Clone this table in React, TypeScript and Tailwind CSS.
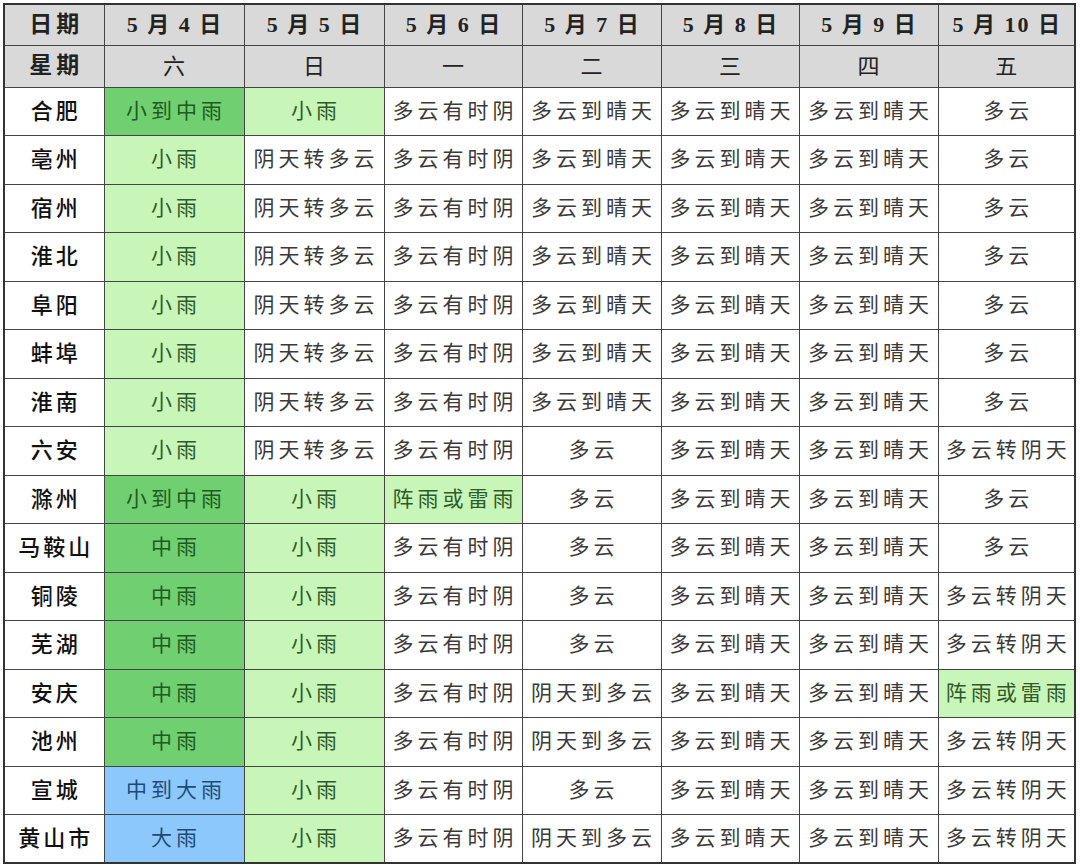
import React from 'react'

type Tone = 'dg' | 'lg' | 'bl' | undefined
type Cell = [string, Tone?]

const dates = ['5 月 4 日', '5 月 5 日', '5 月 6 日', '5 月 7 日', '5 月 8 日', '5 月 9 日', '5 月 10 日']
const weekdays = ['六', '日', '一', '二', '三', '四', '五']
const widths = ['w-[100px]', 'w-[140px]', 'w-[140px]', 'w-[138px]', 'w-[139px]', 'w-[138px]', 'w-[139px]', 'w-[137px]']

const north: Cell[] = [['小雨', 'lg'], ['阴天转多云'], ['多云有时阴'], ['多云到晴天'], ['多云到晴天'], ['多云到晴天'], ['多云']]

const rows: [string, Cell[]][] = [
  ['合肥', [['小到中雨', 'dg'], ['小雨', 'lg'], ['多云有时阴'], ['多云到晴天'], ['多云到晴天'], ['多云到晴天'], ['多云']]],
  ['亳州', north],
  ['宿州', north],
  ['淮北', north],
  ['阜阳', north],
  ['蚌埠', north],
  ['淮南', north],
  ['六安', [['小雨', 'lg'], ['阴天转多云'], ['多云有时阴'], ['多云'], ['多云到晴天'], ['多云到晴天'], ['多云转阴天']]],
  ['滁州', [['小到中雨', 'dg'], ['小雨', 'lg'], ['阵雨或雷雨', 'lg'], ['多云'], ['多云到晴天'], ['多云到晴天'], ['多云']]],
  ['马鞍山', [['中雨', 'dg'], ['小雨', 'lg'], ['多云有时阴'], ['多云'], ['多云到晴天'], ['多云到晴天'], ['多云']]],
  ['铜陵', [['中雨', 'dg'], ['小雨', 'lg'], ['多云有时阴'], ['多云'], ['多云到晴天'], ['多云到晴天'], ['多云转阴天']]],
  ['芜湖', [['中雨', 'dg'], ['小雨', 'lg'], ['多云有时阴'], ['多云'], ['多云到晴天'], ['多云到晴天'], ['多云转阴天']]],
  ['安庆', [['中雨', 'dg'], ['小雨', 'lg'], ['多云有时阴'], ['阴天到多云'], ['多云到晴天'], ['多云到晴天'], ['阵雨或雷雨', 'lg']]],
  ['池州', [['中雨', 'dg'], ['小雨', 'lg'], ['多云有时阴'], ['阴天到多云'], ['多云到晴天'], ['多云到晴天'], ['多云转阴天']]],
  ['宣城', [['中到大雨', 'bl'], ['小雨', 'lg'], ['多云有时阴'], ['多云'], ['多云到晴天'], ['多云到晴天'], ['多云转阴天']]],
  ['黄山市', [['大雨', 'bl'], ['小雨', 'lg'], ['多云有时阴'], ['阴天到多云'], ['多云到晴天'], ['多云到晴天'], ['多云转阴天']]],
]

const toneClass = (t: Tone) => {
  if (t === 'dg') return 'bg-[#70cf70] text-[#1f5a1f]'
  if (t === 'lg') return 'bg-[#c8f5b8] text-[#2f5a2a]'
  if (t === 'bl') return 'bg-[#8dc8fc] text-[#1e4a7a]'
  return 'bg-white text-[#3a3a3a]'
}

export default function App() {
  return (
    <div className="min-h-screen bg-white pt-[3px] pl-[3px]">
      <table
        className="border-collapse border-2 border-[#333] table-fixed"
        style={{ fontFamily: '"Liberation Serif", "Noto Sans CJK SC", serif' }}
      >
        <thead>
          <tr className="h-[41px] bg-[#d9d9d9] text-[#222]">
            <th className={`${widths[0]} border border-[#444] text-[23px] font-semibold tracking-[4px] pl-[4px]`}>日期</th>
            {dates.map((d, i) => (
              <th key={d} className={`${widths[i + 1]} border border-[#444] text-[22px] font-semibold whitespace-pre tracking-[2px] pl-[2px]`}>
                {d}
              </th>
            ))}
          </tr>
          <tr className="h-[42px] bg-[#d9d9d9] text-[#222]">
            <th className="border border-[#444] text-[23px] font-semibold tracking-[4px] pl-[4px]">星期</th>
            {weekdays.map((w) => (
              <th key={w} className="border border-[#444] text-[22px] font-normal">{w}</th>
            ))}
          </tr>
        </thead>
        <tbody>
          {rows.map(([city, cells]) => (
            <tr key={city} className="h-[48.5px]">
              <td className="border border-[#444] bg-white text-center text-[22px] font-medium text-[#111] tracking-[3px] pl-[3px]">
                {city}
              </td>
              {cells.map(([txt, tone], i) => (
                <td
                  key={i}
                  className={`border border-[#444] text-center text-[21px] tracking-[4px] pl-[4px] whitespace-nowrap ${toneClass(tone)}`}
                >
                  {txt}
                </td>
              ))}
            </tr>
          ))}
        </tbody>
      </table>
    </div>
  )
}
